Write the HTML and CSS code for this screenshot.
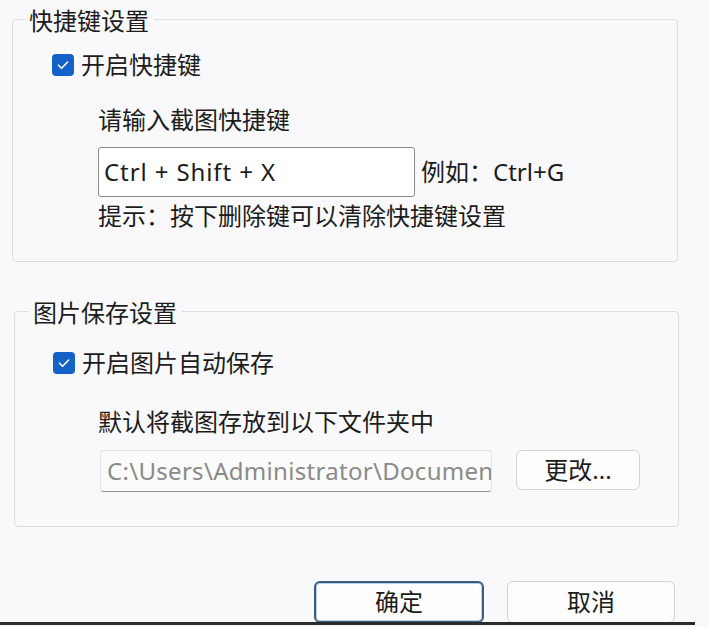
FILE: index.html
```html
<!DOCTYPE html>
<html lang="zh-CN">
<head>
<meta charset="utf-8">
<title>设置</title>
<link rel="stylesheet" href="styles.css">
</head>
<body>
<div class="dialog">
  <fieldset class="group group-hotkey">
    <legend class="group-title">快捷键设置</legend>
    <label class="check-row">
      <span class="checkbox"><svg viewBox="0 0 22 22" width="22" height="22"><path d="M6.5 11.2 L9.6 14.2 L15.6 8" fill="none" stroke="#fff" stroke-width="1.6" stroke-linecap="round" stroke-linejoin="round"/></svg></span>
      <span class="check-label">开启快捷键</span>
    </label>
    <div class="indent">
      <div class="line line-prompt">请输入截图快捷键</div>
      <div class="input-row">
        <input class="hotkey-input" type="text" value="Ctrl + Shift + X">
        <span class="example">例如：Ctrl+G</span>
      </div>
      <div class="line line-tip">提示：按下删除键可以清除快捷键设置</div>
    </div>
  </fieldset>

  <fieldset class="group group-save">
    <legend class="group-title">图片保存设置</legend>
    <label class="check-row">
      <span class="checkbox"><svg viewBox="0 0 22 22" width="22" height="22"><path d="M6.5 11.2 L9.6 14.2 L15.6 8" fill="none" stroke="#fff" stroke-width="1.6" stroke-linecap="round" stroke-linejoin="round"/></svg></span>
      <span class="check-label">开启图片自动保存</span>
    </label>
    <div class="indent">
      <div class="line line-folder">默认将截图存放到以下文件夹中</div>
      <div class="path-row">
        <input class="path-input" type="text" readonly value="C:\Users\Administrator\Documents\Screenshots">
        <button class="btn btn-change" type="button">更改...</button>
      </div>
    </div>
  </fieldset>

  <div class="actions">
    <button class="btn btn-action btn-default" type="button">确定</button>
    <button class="btn btn-action" type="button">取消</button>
  </div>
  <div class="bottom-line"></div>
</div>
</body>
</html>
```

FILE: styles.css
```css
html, body {
  margin: 0;
  padding: 0;
  background: #f9f9fb;
}

body {
  font-family: "Noto Sans", "Noto Sans CJK SC", sans-serif;
  font-size: 24px;
  color: #1c1c1c;
}

.dialog {
  width: 709px;
  height: 627px;
  padding-top: 2px;
  box-sizing: border-box;
  overflow: hidden;
}

.group {
  margin: 0;
  border: 1px solid #dedfe2;
  border-radius: 4px;
  padding: 0;
  min-width: 0;
}

.group-title {
  padding: 4px 5px 0 4px;
  line-height: 30px;
  height: 30px;
}

.group-hotkey {
  margin: 0 31px 0 12px;
  padding: 14px 0 30px 39px;
}

.group-hotkey .group-title {
  margin-left: -27px;
}

.group-save {
  margin: 32px 30px 0 14px;
  padding: 20px 0 34px 38px;
}

.group-save .group-title {
  margin-left: -24px;
}

.check-row {
  display: flex;
  align-items: center;
  gap: 7px;
  height: 30px;
}

.checkbox {
  width: 22px;
  height: 22px;
  border-radius: 4px;
  background: #1461c7;
  display: flex;
  align-items: center;
  justify-content: center;
}

.check-label {
  line-height: 30px;
}

.indent {
  margin-left: 46px;
}

.group-save .indent {
  margin-left: 45px;
}

.line {
  line-height: 30px;
  height: 30px;
  white-space: nowrap;
}

.line-prompt {
  margin-top: 25px;
}

.input-row {
  display: flex;
  align-items: center;
  gap: 6px;
  margin-top: 12px;
}

.hotkey-input {
  width: 317px;
  height: 50px;
  box-sizing: border-box;
  border: 1px solid #8c8c8c;
  border-radius: 3px;
  background: #ffffff;
  padding: 0 0 2px 5px;
  font: inherit;
  letter-spacing: 0.9px;
  color: #1c1c1c;
  outline: none;
}

.example {
  line-height: 30px;
  white-space: nowrap;
}

.line-tip {
  margin-top: 4px;
}

.line-folder {
  margin-top: 29px;
}

.path-row {
  display: flex;
  align-items: center;
  gap: 24px;
  margin-top: 13px;
  margin-left: 2px;
}

.path-input {
  width: 392px;
  height: 42px;
  box-sizing: border-box;
  border: 1px solid #e4e4e6;
  border-bottom: 1px solid #8e8e8e;
  border-radius: 4px;
  background: #fbfbfb;
  padding: 0 0 2px 6px;
  font: inherit;
  letter-spacing: 0.3px;
  color: #8a8a8a;
  outline: none;
}

.btn {
  font: inherit;
  color: #1c1c1c;
  background: #fdfdfd;
  border: 1px solid #d3d3d6;
  border-radius: 6px;
  cursor: default;
  padding: 0;
}

.btn-change {
  width: 124px;
  height: 40px;
  margin-top: -2px;
  line-height: 36px;
}

.actions {
  display: flex;
  justify-content: flex-end;
  gap: 23px;
  margin: 54px 34px 0 0;
  height: 42px;
}

.btn-action {
  width: 168px;
  height: 42px;
  line-height: 38px;
}

.btn-default {
  width: 170px;
  border: 2px solid #3e5d7e;
  box-shadow: inset 0 0 0 1px #b9d0e6;
}

.bottom-line {
  width: 695px;
  height: 3px;
  background: #2b2b2b;
  margin-top: -1px;
  position: relative;
}
```
